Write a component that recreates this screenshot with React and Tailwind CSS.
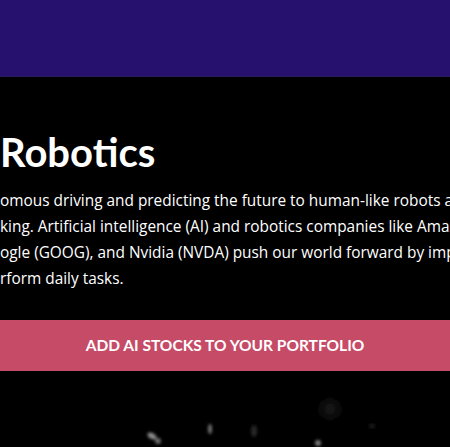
const lines = [
  "omous driving and predicting the future to human-like robots and",
  "king. Artificial intelligence (AI) and robotics companies like Amazon",
  "ogle (GOOG), and Nvidia (NVDA) push our world forward by improving",
  "rform daily tasks.",
];

const PhotoStrip = () => (
  <svg width="450" height="76" viewBox="0 0 450 76" className="block">
    <defs>
      <filter id="soft" x="-50%" y="-50%" width="200%" height="200%">
        <feGaussianBlur stdDeviation="1.6" />
      </filter>
      <filter id="softer" x="-50%" y="-50%" width="200%" height="200%">
        <feGaussianBlur stdDeviation="5" />
      </filter>
    </defs>
    <g filter="url(#soft)">
      <ellipse cx="152" cy="65" rx="5" ry="3" fill="#8a8a8a" transform="rotate(30 152 65)" />
      <ellipse cx="158" cy="70" rx="3" ry="3" fill="#6a6a6a" />
      <ellipse cx="210" cy="58" rx="2" ry="5" fill="#6f6f6f" />
      <ellipse cx="254" cy="60" rx="3" ry="6" fill="#262626" />
      <ellipse cx="318" cy="72" rx="3" ry="3" fill="#7a7a7a" />
      <ellipse cx="372" cy="55" rx="3" ry="2" fill="#1c1c1c" />
    </g>
    <g filter="url(#softer)">
      <ellipse cx="330" cy="38" rx="9" ry="10" fill="#121212" />
    </g>
  </svg>
);

const App = () => {
  return (
    <div className="w-[450px] h-[447px] overflow-hidden bg-black">
      <div className="h-[77px] bg-[#27116f] border-b border-[#2a1d5c]" />
      <section className="pt-[52px]">
        <h2 className="font-['Lato',sans-serif] font-bold text-[40px] leading-[47px] text-white">
          Robotics
        </h2>
        <p className="mt-[12px] font-['Open_Sans',sans-serif] text-[15.4px] leading-[26px] text-white">
          {lines.map((line, i) => (
            <span key={i} className="block whitespace-nowrap">
              {line}
            </span>
          ))}
        </p>
      </section>
      <button className="mt-[28px] w-full h-[51px] bg-[#c54b67] flex items-center justify-center font-['Lato',sans-serif] font-bold text-[15.5px] text-white uppercase">
        Add AI stocks to your portfolio
      </button>
      <PhotoStrip />
    </div>
  );
};

export default App;
